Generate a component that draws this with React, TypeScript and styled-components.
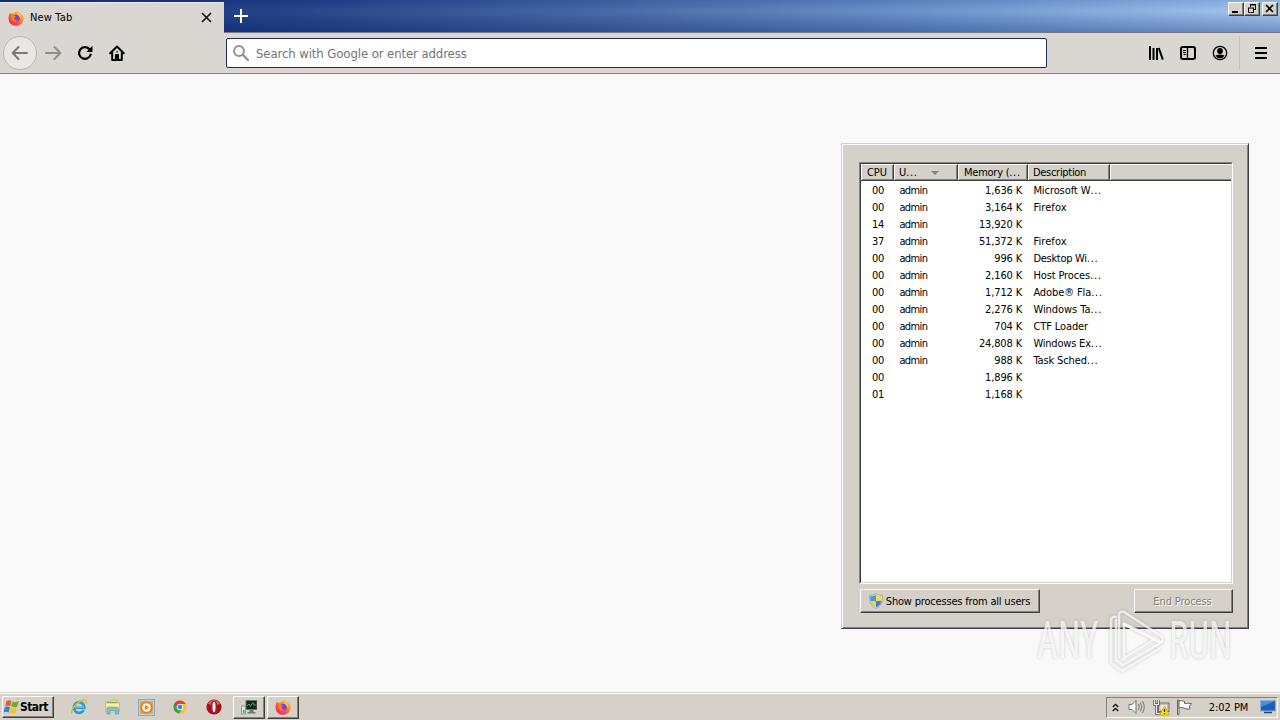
import React from "react";
import styled, { createGlobalStyle } from "styled-components";

const Global = createGlobalStyle`
  * { box-sizing: border-box; }
  body { margin: 0; overflow: hidden; }
`;

const Screen = styled.div`
  position: relative;
  width: 1280px;
  height: 720px;
  display: flex;
  flex-direction: column;
  background: #f9f9f9;
  font-family: "DejaVu Sans Condensed", "DejaVu Sans", sans-serif;
  font-stretch: condensed;
  font-size: 11px;
  color: #000;
  white-space: nowrap;
`;

const Label = styled.span<{ $track?: number }>`
  letter-spacing: ${(p) => p.$track ?? -0.3}px;
`;

/* ---------- browser chrome ---------- */
const TitleBar = styled.div`
  height: 33px;
  flex: none;
  display: flex;
  padding-top: 2px;
  border-bottom: 1px solid #77777d;
  background: linear-gradient(180deg, rgba(10, 36, 106, 0.12), rgba(255, 255, 255, 0.05) 35%, rgba(10, 36, 106, 0.32)),
    linear-gradient(90deg, #0f2c78 0%, #1d3a82 22%, #3d5f9f 45%, #6b94ce 75%, #a0c5ef 100%);
`;

const Tab = styled.div`
  width: 224px;
  height: 31px;
  display: flex;
  align-items: center;
  padding: 0 11px 1px 8px;
  background: #dad7d2;
  border-top: 1px solid #e9edf0;
  & > span { flex: 1; margin-left: 6px; }
`;

const NewTab = styled.div`
  width: 33px;
  height: 28px;
  display: grid;
  place-items: center;
`;

const Spacer = styled.div`
  flex: 1;
`;

const Captions = styled.div`
  display: flex;
  padding-right: 2px;
  height: 14px;
`;

const CaptionButton = styled.div<{ $gap?: number }>`
  width: 16px;
  height: 14px;
  margin-left: ${(p) => p.$gap ?? 0}px;
  background: #d6d3cc;
  border: 1px solid;
  border-color: #fff #404040 #404040 #fff;
  box-shadow: inset -1px -1px #858179;
  display: grid;
  place-items: center;
`;

const Toolbar = styled.div`
  height: 41px;
  flex: none;
  display: flex;
  align-items: center;
  background: #dad7d2;
  border-bottom: 1px solid #85837f;
`;

const NavGroup = styled.div`
  width: 226px;
  padding-left: 3px;
  display: flex;
  align-items: center;
`;

const BackButton = styled.div`
  width: 34px;
  height: 34px;
  border-radius: 50%;
  border: 1px solid #bab7b1;
  background: #e9e7e3;
  display: grid;
  place-items: center;
`;

const ToolButton = styled.div`
  width: 32px;
  height: 32px;
  display: grid;
  place-items: center;
`;

const UrlBar = styled.div`
  width: 821px;
  height: 30px;
  display: flex;
  align-items: center;
  padding-left: 6px;
  gap: 7px;
  background: #fff;
  border: 1px solid #1d2c5a;
  border-radius: 2px;
  color: #747474;
  font-size: 13px;
`;

const ToolGroup = styled.div`
  display: flex;
  align-items: center;
  margin: 0 3px 0 auto;
`;

const ToolDivider = styled.div`
  width: 1px;
  height: 34px;
  margin: 0 5px 0 3px;
  background: #c5c2bd;
`;

const Page = styled.div`
  flex: 1;
`;

/* ---------- process window ---------- */
const Dialog = styled.div`
  position: absolute;
  left: 841px;
  top: 143px;
  width: 408px;
  height: 486px;
  padding: 17px 14px 0 16px;
  background: #d5d0c8;
  border: 1px solid;
  border-color: #d5d0c8 #404040 #404040 #d5d0c8;
  box-shadow: inset 1px 1px #fff, inset -1px -1px #858179;
  display: flex;
  flex-direction: column;
`;

const ListFrame = styled.div`
  margin: 1px 0 0 1px;
  width: 374px;
  height: 422px;
  border: 1px solid;
  border-color: #858179 #fff #fff #858179;
`;

const List = styled.div`
  height: 420px;
  border: 1px solid;
  border-color: #404040 #d5d0c8 #d5d0c8 #404040;
  background: #fff;
`;

const columns = "33px 64px 70px 82px 1fr";

const HeaderRow = styled.div`
  display: grid;
  grid-template-columns: ${columns};
  height: 17px;
  margin-bottom: 1px;
`;

const HeaderCell = styled.div<{ $pad?: number }>`
  display: flex;
  align-items: center;
  padding: 1px 0 0 ${(p) => p.$pad ?? 5}px;
  line-height: 14px;
  background: #d3d1c8;
  border-top: 1px solid #fff;
  border-bottom: 1px solid #404040;
  border-right: 1px solid #404040;
  box-shadow: inset 1px 0 #fff, inset -1px -1px #858179;
  overflow: hidden;
  &:last-child { border-right: 0; box-shadow: inset 1px 0 #fff, inset 0 -1px #858179; }
`;

const SortArrow = styled.i`
  margin-left: 13px;
  border: 4px solid transparent;
  border-top-color: #858179;
  border-bottom: 0;
`;

const Row = styled.div`
  display: grid;
  grid-template-columns: ${columns};
  height: 17px;
  align-items: center;
`;

const Cell = styled.div<{ $right?: boolean; $pad?: number }>`
  text-align: ${(p) => (p.$right ? "right" : "left")};
  padding: ${(p) => (p.$right ? "0 6px 0 0" : `0 0 0 ${p.$pad ?? 5.4}px`)};
`;

const ButtonRow = styled.div`
  margin: 5px 0 0 2px;
  width: 373px;
  display: flex;
  justify-content: space-between;
`;

const PushButton = styled.div<{ $w: number; $disabled?: boolean }>`
  width: ${(p) => p.$w}px;
  height: 24px;
  display: flex;
  align-items: center;
  justify-content: center;
  gap: 2px;
  padding-right: 2px;
  border: 1px solid;
  border-color: #fff #404040 #404040 #fff;
  box-shadow: inset -1px -1px #858179;
  color: ${(p) => (p.$disabled ? "#858179" : "#000")};
  text-shadow: ${(p) => (p.$disabled ? "1px 1px #fff" : "none")};
`;

/* ---------- watermark ---------- */
const Watermark = styled.div`
  position: absolute;
  left: 1037px;
  top: 608px;
  width: 198px;
  height: 66px;
  display: flex;
  align-items: center;
  color: rgba(255, 255, 255, 0.72);
  filter: drop-shadow(0 0 1.5px rgba(90, 90, 90, 0.4));
`;

const Word = styled.div<{ $w: number; $scale: number }>`
  width: ${(p) => p.$w}px;
  font-family: Roboto, sans-serif;
  font-size: 51px;
  line-height: 66px;
  transform: scaleX(${(p) => p.$scale});
  transform-origin: left;
`;

/* ---------- taskbar ---------- */
const Taskbar = styled.div`
  height: 28px;
  flex: none;
  display: flex;
  align-items: center;
  padding: 1px 2px 0;
  background: #d5d0c8;
  border-top: 1px solid #d5d0c8;
  box-shadow: inset 0 1px #fff;
`;

const StartButton = styled.div`
  width: 52px;
  height: 22px;
  display: flex;
  align-items: center;
  padding-left: 0;
  border: 1px solid;
  border-color: #fff #404040 #404040 #fff;
  box-shadow: inset -1px -1px #858179;
  font-weight: bold;
  font-size: 12px;
`;

const QuickIcon = styled.div`
  width: 33.7px;
  display: grid;
  place-items: center;
`;

const QuickLaunch = styled.div`
  display: flex;
  margin-left: 8px;
`;

const TaskButton = styled.div<{ $gap?: number }>`
  width: 32px;
  height: 23px;
  margin-left: ${(p) => p.$gap ?? 0}px;
  display: grid;
  place-items: center;
  border: 1px solid;
  border-color: #fff #404040 #404040 #fff;
  box-shadow: inset -1px -1px #858179;
`;

const Tray = styled.div`
  width: 172px;
  height: 21px;
  margin-left: auto;
  display: flex;
  align-items: center;
  padding: 0 1px 0 5px;
  border: 1px solid;
  border-color: #858179 #fff #fff #858179;
`;

const TrayIcon = styled.div<{ $w: number }>`
  width: ${(p) => p.$w}px;
  display: grid;
  place-items: center;
`;

const Clock = styled.div`
  width: 60px;
  padding-right: 4px;
  text-align: center;
`;

/* ---------- drawings ---------- */
const FirefoxIcon = ({ size = 16 }: { size?: number }) => (
  <svg width={size} height={size} viewBox="0 0 16 16">
    <defs>
      <linearGradient id="fx" x1="1" y1="0" x2="0.2" y2="1">
        <stop offset="0" stopColor="#ffe14a" />
        <stop offset="0.4" stopColor="#ff9422" />
        <stop offset="0.75" stopColor="#ff4545" />
        <stop offset="1" stopColor="#e8286c" />
      </linearGradient>
    </defs>
    <path d="M1.2 4.2 2.4 2.4 3.2 4 5.4 3.5 8.6 1.4 9.6.2C10 1.8 11 2.4 12 3.2 14.6 4 15.8 6.500 15.600 9 15.200 13 12 15.800 8 15.800 3.800 15.800.5 12.500.5 8.400.5 6.800.7 5.400 1.200 4.200Z" fill="url(#fx)" />
    <circle cx="8.300" cy="8.200" r="3.500" fill="#7a42d8" />
    <path d="M3.500 6.200C5 5.300 7 5.600 8 6.500L6.300 7.700C6 9.800 8 10.800 10 10.100 8.500 12.500 4.500 11.900 3.700 8.700Z" fill="#ff8a20" />
    <path d="M8.800 1.600C11.500 3 13.600 6 12.500 9.200 12 7 11 5.300 9.200 4.700Z" fill="#ffc93a" />
  </svg>
);

const BackArrow = ({ flip }: { flip?: boolean }) => (
  <svg width="18" height="18" viewBox="0 0 18 18" fill="none" stroke={flip ? "#918e8a" : "#7b7976"} strokeWidth="2" strokeLinecap="round" strokeLinejoin="round">
    {flip ? <path d="M2 9H16M10.500 3 16.300 9 10.500 15" /> : <path d="M16 9H2M7.500 3 1.700 9 7.500 15" />}
  </svg>
);

const ReloadIcon = () => (
  <svg width="16" height="16" viewBox="0 0 16 16">
    <path d="M13.700 9.500A5.900 5.900 0 1 1 12.300 4" fill="none" stroke="#000" strokeWidth="2.200" strokeLinecap="round" />
    <path d="M15.500.8V7H9.300Z" />
  </svg>
);

const HomeIcon = () => (
  <svg width="16" height="16" viewBox="0 0 16 16" fill="none" stroke="#000" strokeWidth="2" strokeLinecap="round" strokeLinejoin="round">
    <path d="M1.200 8.200 8 1.500l6.800 6.700M3.200 8V15H12.800V8" />
    <path d="M6.500 15V9.500H9.500V15Z" fill="#000" strokeWidth="1" />
    <path d="M8 6.800v.2" strokeWidth="1.500" />
  </svg>
);

const ShieldIcon = () => (
  <svg width="16" height="16" viewBox="0 0 16 16">
    <path d="M8 .5C10 2 12.500 2.300 14.600 2.300 15 8 13 13 8 15.600 3 13 1 8 1.400 2.300 3.500 2.300 6 2 8 .5Z" fill="#d7dde4" stroke="#8597a8" strokeWidth=".7" />
    <path d="M8 2V8H2.500C2.200 6.300 2.200 5 2.400 3.300 4.500 3.300 6.500 3 8 2Z" fill="#3f9be6" />
    <path d="M8 2V8H13.500C13.800 6.300 13.800 5 13.600 3.300 11.500 3.300 9.500 3 8 2Z" fill="#f8d84b" />
    <path d="M8 8V14.500C5 13 3.200 10.800 2.500 8Z" fill="#f6d03c" />
    <path d="M8 8V14.500C11 13 12.800 10.800 13.500 8Z" fill="#2f86da" />
  </svg>
);

const WindowsFlag = () => (
  <svg width="17" height="16" viewBox="0 0 17 16">
    <path d="M3.500 2C5.500.8 7 1 8.500 2L7.200 7.200C5.500 6.200 4 6.200 2.200 7.200Z" fill="#e75b24" />
    <path d="M9.500 2.400C11.500 3.500 13.200 3.400 15.800 2L14.300 7.400C12 8.700 10.200 8.500 8.200 7.600Z" fill="#6cae35" />
    <path d="M1.900 8.300C3.600 7.300 5.200 7.300 6.900 8.300L5.600 13.500C4 12.400 2.300 12.500.5 13.500Z" fill="#2f80ce" />
    <path d="M7.900 8.700C10 9.700 11.800 9.600 14 8.400L12.600 13.800C10.500 15 8.500 14.800 6.500 13.900Z" fill="#f7c52a" />
  </svg>
);

const ExplorerE = () => (
  <svg width="18" height="18" viewBox="0 0 18 18" fill="none">
    <path d="M13.800 12A5.300 5.300 0 1 1 14.400 9.600H5" stroke="#2b9ada" strokeWidth="2.700" />
    <path d="M4.500 9H14" stroke="#8bd4f5" strokeWidth="1" />
    <path d="M2.200 15.600C-.6 13.500 6 4.400 13 2.200 16.500 1.100 17.200 3 15.600 5.600" stroke="#e3b52e" strokeWidth="1.400" />
  </svg>
);

const FolderIcon = () => (
  <svg width="17" height="16" viewBox="0 0 17 16">
    <path d="M1.500 2.500H7L8 1H13.500V3.500H15.500V13H1.500Z" fill="#f1d77b" stroke="#d6b34f" strokeWidth=".7" />
    <path d="M3 3.500H13" stroke="#62b76a" />
    <path d="M2 6H15" stroke="#fff3b8" strokeWidth="1.500" />
    <path d="M3 15V10.500Q3 8.500 5 8.500H12.500Q14.500 8.500 14.500 10.500V15H11.500V11.500H6V15Z" fill="#79bfe7" stroke="#4a97c7" strokeWidth=".6" />
  </svg>
);

const PlayerIcon = () => (
  <svg width="17" height="17" viewBox="0 0 17 17">
    <rect x=".7" y=".7" width="15.600" height="15.600" fill="#c9e4f7" stroke="#5aa4dc" />
    <rect x="2" y="2" width="13" height="13" fill="#f4a24a" />
    <circle cx="8.500" cy="8.500" r="5.800" fill="#f28918" stroke="#d96b09" strokeWidth=".6" />
    <circle cx="8.500" cy="8.500" r="4.200" fill="#fff" />
    <path d="M6.800 5.700 11.300 8.500 6.800 11.300Z" fill="#ee7d10" />
  </svg>
);

const ChromeIcon = () => (
  <svg width="14" height="14" viewBox="0 0 16 16">
    <circle cx="8" cy="8" r="7.500" fill="#fbc116" />
    <path d="M8 8 1.500 4.250A7.500 7.500 0 0 0 7 15.400L10.500 9.500Z" fill="#2da44e" />
    <path d="M1.500 4.250A7.500 7.500 0 0 1 14.500 4.500H8L4.900 9.500Z" fill="#e33b2e" />
    <circle cx="8" cy="8" r="3.700" fill="#fff" />
    <circle cx="8" cy="8" r="2.800" fill="#3e82ee" />
  </svg>
);

const OperaIcon = () => (
  <svg width="16" height="16" viewBox="0 0 16 16">
    <circle cx="8" cy="8" r="7.600" fill="#a4131b" />
    <path d="M2 4.500A7 7 0 0 1 14 4.500 7 4 0 0 1 2 4.500Z" fill="#dc646a" />
    <ellipse cx="8" cy="8" rx="3.600" ry="6.400" fill="#b8141c" />
    <ellipse cx="8" cy="8" rx="1.500" ry="5.200" fill="#fff" />
  </svg>
);

const MonitorIcon = () => (
  <svg width="16" height="16" viewBox="0 0 16 16">
    <rect x="5" y="1.500" width="11" height="9" fill="#18221c" stroke="#68736d" />
    <path d="M6 7 8 5 9.500 7.500 12 3.500 13 6H15" stroke="#29b44b" fill="none" />
    <path d="M8.500 11H12.500V13H14.500V14.500H6.500V13H8.500Z" fill="#6f7871" />
    <rect x=".5" y="7" width="4" height="8" fill="#dce4dd" stroke="#738078" strokeWidth=".7" />
    <path d="M2 11H3.500V14H2Z" fill="#28b24a" />
  </svg>
);

const NetworkIcon = () => (
  <svg width="17" height="17" viewBox="0 0 17 17">
    <rect x="5.500" y="4" width="10.500" height="8.500" fill="#d3d0c9" stroke="#6c6c6c" />
    <rect x="7" y="5.500" width="7.500" height="5.500" fill="#ebe9e4" stroke="#999" strokeWidth=".5" />
    <path d="M1.500 1V5.500H5.500V1M3.500 5.500V14.500H8" stroke="#555" strokeWidth="2.600" fill="none" />
    <path d="M1.500 1V5.500H5.500V1M3.500 5.500V14.500H8" stroke="#eee" strokeWidth="1.100" fill="none" />
    <path d="M11.500 7 16.400 16H6.600Z" fill="#ffdc18" stroke="#c39b00" strokeWidth=".7" />
    <path d="M11.500 10V13M11.500 14V15" stroke="#222" strokeWidth="1.200" />
  </svg>
);

/* Truncated names end in three widely set dots. */
const Truncated = ({ text, track }: { text: string; track: number }) => {
  const cut = text.endsWith("...");
  const head = cut ? text.slice(0, -3) : text;
  return (
    <>
      <Label $track={track}>{head}</Label>
      {cut && <Label $track={0.7}>...</Label>}
    </>
  );
};

const processes: [string, string, string, string, number][] = [
  ["00", "admin", "1,636 K", "Microsoft W...", -0.08],
  ["00", "admin", "3,164 K", "Firefox", 0.1],
  ["14", "admin", "13,920 K", "", 0],
  ["37", "admin", "51,372 K", "Firefox", 0.1],
  ["00", "admin", "996 K", "Desktop Wi...", -0.28],
  ["00", "admin", "2,160 K", "Host Proces...", -0.12],
  ["00", "admin", "1,712 K", "Adobe® Fla...", -0.1],
  ["00", "admin", "2,276 K", "Windows Ta...", -0.05],
  ["00", "admin", "704 K", "CTF Loader", -0.1],
  ["00", "admin", "24,808 K", "Windows Ex...", -0.2],
  ["00", "admin", "988 K", "Task Sched...", -0.12],
  ["00", "", "1,896 K", "", 0],
  ["01", "", "1,168 K", "", 0],
];

export default function App() {
  return (
    <Screen>
      <Global />
      <TitleBar>
        <Tab>
          <FirefoxIcon />
          <Label $track={0.15}>New Tab</Label>
          <svg width="13" height="13" viewBox="0 0 13 13">
            <path d="M2 2 11 11M11 2 2 11" stroke="#111" strokeWidth="1.600" />
          </svg>
        </Tab>
        <NewTab>
          <svg width="14" height="14" viewBox="0 0 14 14">
            <path d="M7 0V14M0 7H14" stroke="#fff" strokeWidth="2" />
          </svg>
        </NewTab>
        <Spacer />
        <Captions>
          <CaptionButton>
            <svg width="12" height="10"><path d="M2 8H8" stroke="#000" strokeWidth="2" /></svg>
          </CaptionButton>
          <CaptionButton>
            <svg width="12" height="10" fill="none" stroke="#000">
              <path d="M4.500 3V.5H9.500V5.500H7.500M4 1H10M2.500 4V8.500H7.500V4M2 4H8" />
            </svg>
          </CaptionButton>
          <CaptionButton $gap={2}>
            <svg width="12" height="10"><path d="M2 1 9 8M9 1 2 8" stroke="#000" strokeWidth="1.600" /></svg>
          </CaptionButton>
        </Captions>
      </TitleBar>

      <Toolbar>
        <NavGroup>
          <BackButton><BackArrow /></BackButton>
          <ToolButton><BackArrow flip /></ToolButton>
          <ToolButton><ReloadIcon /></ToolButton>
          <ToolButton><HomeIcon /></ToolButton>
        </NavGroup>
        <UrlBar>
          <svg width="16" height="16" viewBox="0 0 16 16" fill="none" stroke="#929292" strokeWidth="2">
            <circle cx="6" cy="6" r="4.900" />
            <path d="M9.600 9.600 15 15" strokeWidth="2.300" strokeLinecap="round" />
          </svg>
          <Label $track={-0.09}>Search with Google or enter address</Label>
        </UrlBar>
        <ToolGroup>
          <ToolButton>
            <svg width="16" height="16" viewBox="0 0 16 16" stroke="#000" strokeWidth="2">
              <path d="M2 1V15M5.500 3V15M9 3V15" />
              <path d="M10.800 3 14.800 14.600" />
            </svg>
          </ToolButton>
          <ToolButton>
            <svg width="16" height="16" viewBox="0 0 16 16" fill="none" stroke="#000">
              <rect x="1" y="2" width="14" height="12" rx="2" strokeWidth="2" />
              <path d="M7.500 2V14" strokeWidth="1.300" />
              <path d="M3 5.500H6M3 7.500H6M3.500 9.500H6" />
            </svg>
          </ToolButton>
          <ToolButton>
            <svg width="16" height="16" viewBox="0 0 16 16">
              <circle cx="8" cy="8" r="6.700" fill="none" stroke="#000" strokeWidth="1.300" />
              <circle cx="8" cy="6" r="2.900" />
              <path d="M3.400 10.500Q8 8.500 12.600 10.500 11 13.300 8 13.300 5 13.300 3.400 10.500Z" />
            </svg>
          </ToolButton>
          <ToolDivider />
          <ToolButton>
            <svg width="16" height="16" viewBox="0 0 16 16" stroke="#000" strokeWidth="2">
              <path d="M2 3H14M2 8H14M2 13H14" />
            </svg>
          </ToolButton>
        </ToolGroup>
      </Toolbar>

      <Page />

      <Taskbar>
        <StartButton>
          <WindowsFlag />
          <Label $track={-0.55}>Start</Label>
        </StartButton>
        <QuickLaunch>
          <QuickIcon><ExplorerE /></QuickIcon>
          <QuickIcon><FolderIcon /></QuickIcon>
          <QuickIcon><PlayerIcon /></QuickIcon>
          <QuickIcon><ChromeIcon /></QuickIcon>
          <QuickIcon><OperaIcon /></QuickIcon>
        </QuickLaunch>
        <TaskButton $gap={2.5}><MonitorIcon /></TaskButton>
        <TaskButton $gap={2}><FirefoxIcon /></TaskButton>
        <Tray>
          <TrayIcon $w={8}>
            <svg width="7" height="9" viewBox="0 0 7 9" fill="none" stroke="#000" strokeWidth="1.300">
              <path d="M.8 4 3.500 1.300 6.200 4M.8 8 3.500 5.300 6.200 8" />
            </svg>
          </TrayIcon>
          <TrayIcon $w={34}>
            <svg width="17" height="16" viewBox="0 0 17 16" fill="none" stroke="#777">
              <path d="M1 5.500H4L8 1.500V14.500L4 10.500H1Z" fill="#f8f8f8" />
              <path d="M10.500 5Q12 8 10.500 11M12.500 3.500Q15 8 12.500 12.500M14.500 2Q18 8 14.500 14" />
            </svg>
          </TrayIcon>
          <TrayIcon $w={14}><NetworkIcon /></TrayIcon>
          <TrayIcon $w={35}>
            <svg width="17" height="16" viewBox="0 0 17 16" fill="#fafafa" stroke="#666">
              <path d="M1.500 1V15.500H3V1Z" />
              <path d="M3 2Q6 1 8.500 2.500V4.500Q11.500 4 15.500 4.500L13.500 7 14 10Q10 10.500 8 9Q5 8 3 9Z" />
            </svg>
          </TrayIcon>
          <Clock><Label $track={-0.05}>2:02 PM</Label></Clock>
          <TrayIcon $w={16}>
            <svg width="16" height="14" viewBox="0 0 16 14">
              <rect x=".5" y=".5" width="15" height="10.500" fill="#1c5fb8" stroke="#8fb2dc" />
              <path d="M1 1H15L1 7Z" fill="#4d8ed6" />
              <path d="M4 12.500H12" stroke="#24466f" strokeWidth="1.500" />
            </svg>
          </TrayIcon>
        </Tray>
      </Taskbar>

      <Dialog>
        <ListFrame>
          <List>
            <HeaderRow>
              <HeaderCell $pad={6}><Label $track={-0.1}>CPU</Label></HeaderCell>
              <HeaderCell><Truncated text="U..." track={-0.1} /><SortArrow /></HeaderCell>
              <HeaderCell $pad={6}><Truncated text="Memory (..." track={-0.25} /></HeaderCell>
              <HeaderCell><Label>Description</Label></HeaderCell>
              <HeaderCell />
            </HeaderRow>
            {processes.map(([cpu, user, memory, description, track], i) => (
              <Row key={i}>
                <Cell $pad={11}><Label>{cpu}</Label></Cell>
                <Cell><Label $track={-0.6}>{user}</Label></Cell>
                <Cell $right><Label $track={-0.15}>{memory}</Label></Cell>
                <Cell><Truncated text={description} track={track} /></Cell>
              </Row>
            ))}
          </List>
        </ListFrame>
        <ButtonRow>
          <PushButton $w={180}>
            <ShieldIcon />
            <Label $track={-0.19}>Show processes from all users</Label>
          </PushButton>
          <PushButton $w={99} $disabled><Label $track={-0.1}>End Process</Label></PushButton>
        </ButtonRow>
      </Dialog>

      <Watermark>
        <Word $w={70} $scale={0.71}>ANY</Word>
        <svg width="62" height="66" viewBox="0 0 62 66" fill="none" stroke="currentColor" strokeWidth="2.500" strokeLinejoin="round" strokeLinecap="round">
          <path d="M9 12V52L16 57 55 34" />
          <path d="M9 9Q4 8 4 13V55L15 63 52 41" />
          <path d="M12 49V6Q13 3 17 4L54 28Q58 32 53 35L17 16V50L45 33" />
          <path d="M17 16 52 33" strokeWidth="3.500" />
        </svg>
        <Word $w={64} $scale={0.72}>RUN</Word>
      </Watermark>
    </Screen>
  );
}
